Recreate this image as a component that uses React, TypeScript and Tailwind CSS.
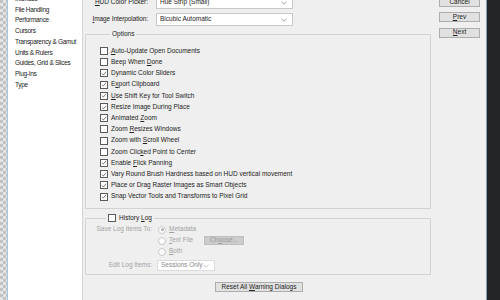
import React from "react";

const U = ({ children }: { children: React.ReactNode }) => <span className="underline underline-offset-[1px]">{children}</span>;

function Check({ checked }: { checked?: boolean }) {
  return (
    <div className="w-[8px] h-[8px] border border-[#5a5a5a] bg-white flex items-center justify-center shrink-0">
      {checked && (
        <svg width="7" height="7" viewBox="0 0 7 7">
          <polyline points="1,3.6 2.7,5.3 6,1.4" fill="none" stroke="#555" strokeWidth="0.9" />
        </svg>
      )}
    </div>
  );
}

function Radio({ on }: { on?: boolean }) {
  return (
    <div className="w-[8px] h-[8px] rounded-full border border-[#c8c8c8] bg-white flex items-center justify-center shrink-0">
      {on && <div className="w-[3px] h-[3px] rounded-full bg-[#b0b0b0]" />}
    </div>
  );
}

function Chevron({ color = "#777" }: { color?: string }) {
  return (
    <svg width="6" height="4" viewBox="0 0 6 4" className="shrink-0">
      <polyline points="0.5,0.8 3,3.2 5.5,0.8" fill="none" stroke={color} strokeWidth="0.7" />
    </svg>
  );
}

function Select({ text, className, disabled }: { text: string; className: string; disabled?: boolean }) {
  return (
    <div className={`bg-white border flex items-center justify-between pl-[3px] pr-[5px] shrink-0 whitespace-nowrap ${className}`}>
      <span className={disabled ? "text-[#8a8a8a]" : ""}>{text}</span>
      <Chevron color={disabled ? "#aaa" : "#777"} />
    </div>
  );
}

function Btn({ children, className }: { children: React.ReactNode; className?: string }) {
  return (
    <div className={`bg-[#e1e1e1] border border-[#adadad] flex items-center justify-center shrink-0 whitespace-nowrap ${className ?? ""}`}>
      <span>{children}</span>
    </div>
  );
}

const options: [React.ReactNode, boolean][] = [
  [<><U>A</U>uto-Update Open Documents</>, false],
  [<>Beep When <U>D</U>one</>, false],
  [<>Dynamic Color Sliders</>, true],
  [<>E<U>x</U>port Clipboard</>, true],
  [<><U>U</U>se Shift Key for Tool Switch</>, true],
  [<>Resize Image During Place</>, true],
  [<>Animated <U>Z</U>oom</>, true],
  [<>Zoom <U>R</U>esizes Windows</>, false],
  [<>Zoom with <U>S</U>croll Wheel</>, false],
  [<>Zoom Clic<U>k</U>ed Point to Center</>, false],
  [<>Enable <U>F</U>lick Panning</>, true],
  [<>Vary Round Brush Hardness based on HUD vertical movement</>, true],
  [<>Place or Drag Raster Images as Smart Objects</>, true],
  [<>Snap Vector Tools and Transforms to Pixel Grid</>, true],
];

const cats = ["Interface", "File Handling", "Performance", "Cursors", "Transparency & Gamut", "Units & Rulers", "Guides, Grid & Slices", "Plug-Ins", "Type"];

export default function App() {
  return (
    <div
      className="w-[500px] h-[300px] bg-[#232526] flex overflow-hidden text-[#222] text-[6.5px] leading-none"
      style={{ fontFamily: '"Liberation Sans", Arial, sans-serif' }}
    >
      <div className="w-[487px] h-full shrink-0 flex bg-[#efefef] border-r border-[#7d9dbd] overflow-hidden">
        {/* checker strip */}
        <div className="w-[7px] h-full shrink-0 overflow-hidden">
          <svg width="7" height="300" className="block">
            <defs>
              <pattern id="ck" width="6" height="6" patternUnits="userSpaceOnUse">
                <rect width="6" height="6" fill="#e4e4e4" />
                <rect x="0" y="0" width="3" height="3" fill="#c2c2c2" />
                <rect x="3" y="3" width="3" height="3" fill="#c2c2c2" />
              </pattern>
            </defs>
            <rect width="7" height="300" fill="url(#ck)" />
          </svg>
        </div>
        <div className="w-[1px] h-full bg-[#a9c4de] shrink-0" />
        {/* category list */}
        <div className="w-[75px] h-full bg-white border-r border-[#d4d4d4] shrink-0 flex flex-col pl-[7px] overflow-hidden">
          <div className="flex flex-col -mt-[6px] tracking-[-0.3px]">
            {cats.map((c) => (
              <div key={c} className="h-[10.7px] flex items-center whitespace-nowrap">{c}</div>
            ))}
          </div>
        </div>
        {/* main column */}
        <div className="w-[349px] h-full shrink-0 flex flex-col pl-[2px]">
          <div className="flex items-center -mt-[4px] h-[13px] shrink-0">
            <div className="w-[63px] shrink-0 text-right whitespace-nowrap"><U>H</U>UD Color Picker:</div>
            <Select text="Hue Strip (Small)" className="ml-[8px] w-[137px] h-[13px] border-[#c9c9c9]" />
          </div>
          <div className="flex items-center mt-[4px] h-[13px] shrink-0">
            <div className="w-[63px] shrink-0 text-right whitespace-nowrap tracking-[-0.1px]"><U>I</U>mage Interpolation:</div>
            <Select text="Bicubic Automatic" className="ml-[8px] w-[137px] h-[13px] border-[#c9c9c9]" />
          </div>
          <fieldset className="mt-[5px] w-[346px] h-[178px] shrink-0 border border-[#d3d3d3] pl-[14px] pt-[8px] min-w-0">
            <legend className="ml-[10px] px-[2px] leading-none">Options</legend>
            <div className="flex flex-col">
              {options.map(([label, checked], i) => (
                <div key={i} className="h-[11.2px] flex items-center gap-[3px] whitespace-nowrap">
                  <Check checked={checked} />
                  <span>{label}</span>
                </div>
              ))}
            </div>
          </fieldset>
          <fieldset className="mt-[5px] w-[346px] h-[61px] shrink-0 border border-[#d3d3d3] min-w-0 pl-[8px]">
            <legend className="ml-[12px] px-[2px] flex items-center gap-[3px] leading-none">
              <Check />
              <span>History <U>L</U>og</span>
            </legend>
            <div className="flex flex-col text-[#a3a3a3] mt-[2px]">
              <div className="flex items-center h-[11px]">
                <div className="w-[58px] text-right whitespace-nowrap">Save Log Items To:</div>
                <div className="ml-[6px] flex items-center gap-[3px]"><Radio on /><span><U>M</U>etadata</span></div>
              </div>
              <div className="flex items-center h-[11px]">
                <div className="ml-[64px] flex items-center gap-[3px] w-[46px] whitespace-nowrap"><Radio /><span><U>T</U>ext File</span></div>
                <div className="bg-[#cccccc] border border-[#bfbfbf] w-[40px] h-[9px] flex items-center justify-center text-[#9a9a9a]"><span>Ch<U>o</U>ose...</span></div>
              </div>
              <div className="flex items-center h-[11px]">
                <div className="ml-[64px] flex items-center gap-[3px]"><Radio /><span><U>B</U>oth</span></div>
              </div>
              <div className="flex items-center h-[11px] mt-[3px]">
                <div className="w-[58px] text-right whitespace-nowrap">Edit Log Items:</div>
                <Select text="Sessions Only" disabled className="ml-[5px] w-[58px] h-[11px] border-[#dcdcdc]" />
              </div>
            </div>
          </fieldset>
          <Btn className="mt-[7px] ml-[130px] w-[88px] h-[10px]">Reset All <U>W</U>arning Dialogs</Btn>
        </div>
        {/* buttons column */}
        <div className="w-[54px] shrink-0 flex flex-col pl-[7px] -mt-[3px] gap-[5.3px]">
          <Btn className="w-[41px] h-[10px]">Cancel</Btn>
          <Btn className="w-[41px] h-[10px]"><U>P</U>rev</Btn>
          <Btn className="w-[41px] h-[10px]"><U>N</U>ext</Btn>
        </div>
      </div>
    </div>
  );
}
